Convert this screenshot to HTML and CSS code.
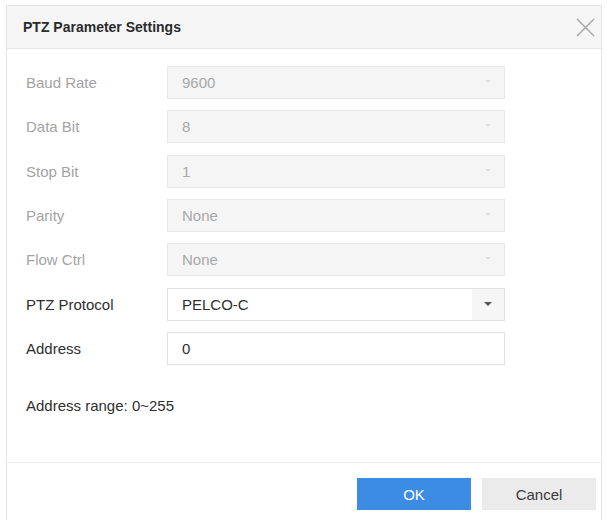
FILE: index.html
```html
<!DOCTYPE html>
<html>
<head>
<meta charset="utf-8">
<link rel="stylesheet" href="styles.css">
</head>
<body>
<div class="dialog">
  <div class="header">
    <span class="title">PTZ Parameter Settings</span>
    <svg class="close" width="19" height="19" viewBox="0 0 19 19"><path d="M1 1L18 18M18 1L1 18" stroke="#a6a6a6" stroke-width="1.4" fill="none"/></svg>
  </div>
  <div class="body">
    <div class="form">
      <div class="row disabled"><span class="label">Baud Rate</span><div class="select"><span class="value">9600</span><span class="arrow"></span></div></div>
      <div class="row disabled"><span class="label">Data Bit</span><div class="select"><span class="value">8</span><span class="arrow"></span></div></div>
      <div class="row disabled"><span class="label">Stop Bit</span><div class="select"><span class="value">1</span><span class="arrow"></span></div></div>
      <div class="row disabled"><span class="label">Parity</span><div class="select"><span class="value">None</span><span class="arrow"></span></div></div>
      <div class="row disabled"><span class="label">Flow Ctrl</span><div class="select"><span class="value">None</span><span class="arrow"></span></div></div>
      <div class="row"><span class="label">PTZ Protocol</span><div class="select"><span class="value">PELCO-C</span><span class="arrow"></span></div></div>
      <div class="row"><span class="label">Address</span><div class="input"><span class="value">0</span></div></div>
    </div>
    <p class="hint">Address range: 0~255</p>
  </div>
  <div class="footer">
    <button class="btn primary">OK</button>
    <button class="btn secondary">Cancel</button>
  </div>
</div>
</body>
</html>
```
FILE: styles.css
```css
html, body {
  margin: 0;
  padding: 0;
  background: #ffffff;
}
body {
  font-family: "Liberation Sans", Arial, sans-serif;
  font-size: 15px;
  color: #333;
}
.dialog {
  margin: 5px 5px 0 6px;
  border: 1px solid #e4e4e4;
  border-bottom: none;
  height: 540px;
  box-sizing: border-box;
  background: #fff;
}
.header {
  height: 42px;
  background: #f5f5f5;
  border-bottom: 1px solid #e6e6e6;
  display: flex;
  align-items: center;
  justify-content: space-between;
  padding: 0 6px 0 16px;
}
.title {
  font-size: 14px;
  font-weight: bold;
  color: #2b2b2b;
}
.close {
  display: block;
}
.body {
  padding: 17px 0 0 19px;
  height: 414px;
  box-sizing: border-box;
  border-bottom: 1px solid #ececec;
}
.form {
  display: flex;
  flex-direction: column;
  gap: 11.33px;
}
.row {
  display: flex;
  align-items: center;
  height: 33px;
}
.label {
  width: 141px;
  color: #2e2e2e;
}
.row.disabled .label {
  color: #a3a3a3;
}
.select, .input {
  width: 338px;
  height: 33px;
  box-sizing: border-box;
  border: 1px solid #e2e2e2;
  background: #fff;
  display: flex;
  align-items: center;
  justify-content: space-between;
  padding-left: 14px;
}
.value {
  color: #2e2e2e;
}
.row.disabled .select {
  background: #f5f5f5;
  border-color: #e8e8e8;
}
.row.disabled .value {
  color: #a8a8a8;
}
.arrow {
  width: 32px;
  height: 31px;
  background: #f6f6f6;
  position: relative;
}
.arrow::after {
  content: "";
  position: absolute;
  left: 12px;
  top: 13px;
  border-left: 4px solid transparent;
  border-right: 4px solid transparent;
  border-top: 4px solid #555;
}
.row.disabled .arrow {
  background: transparent;
}
.row.disabled .arrow::after {
  left: 13px;
  border-left-width: 3px;
  border-right-width: 3px;
  border-top: 3px solid #dedede;
}
.hint {
  margin: 32px 0 0 0;
  color: #2e2e2e;
}
.footer {
  display: flex;
  justify-content: flex-end;
  gap: 11px;
  padding: 15px 5px 0 0;
}
.btn {
  width: 114px;
  height: 32px;
  border: none;
  font-family: "Liberation Sans", Arial, sans-serif;
  font-size: 15px;
  padding: 0;
}
.btn.primary {
  background: #3c8ce4;
  color: #ffffff;
}
.btn.secondary {
  background: #ebebeb;
  color: #3a3a3a;
}
```
